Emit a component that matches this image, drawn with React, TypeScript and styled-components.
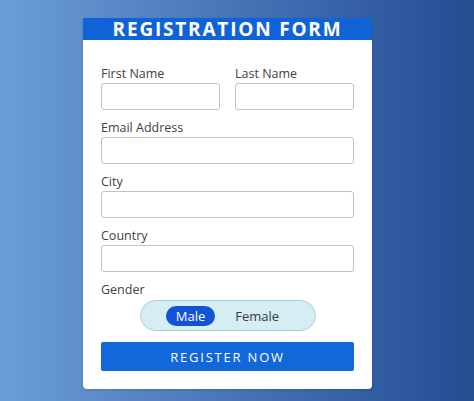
import React from "react";
import styled, { createGlobalStyle } from "styled-components";

const Global = createGlobalStyle`
  html, body { margin: 0; padding: 0; }
  body {
    width: 474px;
    height: 401px;
    overflow: hidden;
    background: linear-gradient(90deg, #6b9fd8 0%, #5584c4 30%, #3c68ad 65%, #244d92 100%);
    font-family: "Open Sans", "Liberation Sans", sans-serif;
  }
`;

const Page = styled.div`
  padding: 18px 0 0 83px;
`;

const Card = styled.div`
  width: 289px;
  background: #ffffff;
  border-radius: 0 0 4px 4px;
  box-shadow: 0 1px 3px rgba(0, 0, 0, 0.15);
`;

const Header = styled.h1`
  margin: 0;
  height: 22px;
  background: #0f63d7;
  color: #ffffff;
  font-family: "Open Sans", sans-serif;
  font-weight: 700;
  font-size: 19px;
  line-height: 23px;
  letter-spacing: 1.8px;
  text-align: center;
`;

const Body = styled.form`
  display: flex;
  flex-direction: column;
  gap: 10px;
  padding: 26px 18px 18px;
`;

const Row = styled.div`
  display: grid;
  grid-template-columns: 1fr 1fr;
  gap: 15px;
`;

const Field = styled.div<{ $gap?: number }>`
  display: flex;
  flex-direction: column;
  gap: ${(p) => p.$gap ?? 1}px;
`;

const Label = styled.label`
  font-size: 12.5px;
  line-height: 16px;
  color: #3f3f3f;
`;

const Input = styled.input`
  box-sizing: border-box;
  width: 100%;
  height: 27px;
  border: 1px solid #c2c2c2;
  border-radius: 3px;
  background: #fff;
  outline: none;
`;

const Toggle = styled.div`
  align-self: center;
  box-sizing: border-box;
  width: 176px;
  height: 31px;
  border: 1px solid #a8d1e0;
  border-radius: 16px;
  background: #d5edf3;
  display: flex;
  align-items: center;
  justify-content: center;
  gap: 10px;
`;

const Option = styled.span<{ $active?: boolean }>`
  height: 20px;
  padding: 0 10px;
  border-radius: 10px;
  font-size: 13px;
  line-height: 20px;
  color: ${(p) => (p.$active ? "#ffffff" : "#3c3c3c")};
  background: ${(p) => (p.$active ? "#1152d6" : "transparent")};
`;

const Button = styled.button`
  margin-top: 1px;
  height: 29px;
  border: none;
  border-radius: 2px;
  background: #1268d8;
  color: #ffffff;
  font-family: "Open Sans", sans-serif;
  font-size: 13px;
  letter-spacing: 1.8px;
  cursor: pointer;
`;

export default function App() {
  return (
    <>
      <Global />
      <Page>
        <Card>
          <Header>REGISTRATION FORM</Header>
          <Body onSubmit={(e) => e.preventDefault()}>
            <Row>
              <Field>
                <Label>First Name</Label>
                <Input />
              </Field>
              <Field>
                <Label>Last Name</Label>
                <Input />
              </Field>
            </Row>
            <Field>
              <Label>Email Address</Label>
              <Input />
            </Field>
            <Field>
              <Label>City</Label>
              <Input />
            </Field>
            <Field>
              <Label>Country</Label>
              <Input />
            </Field>
            <Field $gap={2}>
              <Label>Gender</Label>
              <Toggle>
                <Option $active>Male</Option>
                <Option>Female</Option>
              </Toggle>
            </Field>
            <Button type="submit">REGISTER NOW</Button>
          </Body>
        </Card>
      </Page>
    </>
  );
}
